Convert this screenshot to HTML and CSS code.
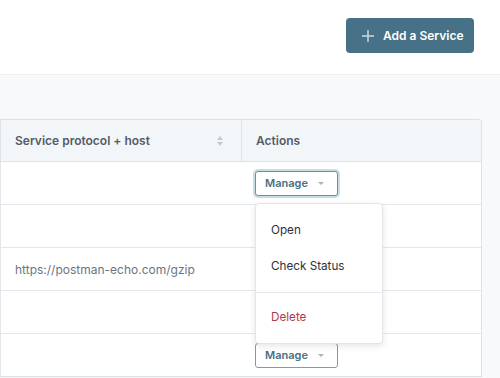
FILE: index.html
```html
<!DOCTYPE html>
<html lang="en">
<head>
  <meta charset="UTF-8">
  <meta name="viewport" content="width=device-width, initial-scale=1.0">
  <link rel="stylesheet" href="styles.css">
</head>
<body>

<div class="topbar">
  <button class="btn-add">
    <svg width="12" height="12" viewBox="0 0 12 12"><path d="M6 0v12M0 6h12" stroke="#c9d7de" stroke-width="1.5" fill="none"/></svg>
    Add a Service
  </button>
</div>

<div class="content">
  <table class="services">
    <thead>
      <tr>
        <th class="col-host">
          <div class="th-inner">
            Service protocol + host
            <svg class="sort" width="8" height="12" viewBox="0 0 8 12"><path d="M4 1L7 5H1z M4 11L1 7h6z" fill="#c3c9d0"/></svg>
          </div>
        </th>
        <th class="col-actions">Actions</th>
      </tr>
    </thead>
    <tbody>
      <tr>
        <td></td>
        <td class="actions-cell">
          <button class="btn-manage focused">Manage <span class="caret"></span></button>
          <div class="menu">
            <div class="menu-item">Open</div>
            <div class="menu-item">Check Status</div>
            <div class="menu-sep"></div>
            <div class="menu-item danger">Delete</div>
          </div>
        </td>
      </tr>
      <tr><td></td><td></td></tr>
      <tr><td class="url">https://postman-echo.com/gzip</td><td></td></tr>
      <tr><td></td><td></td></tr>
      <tr>
        <td></td>
        <td><button class="btn-manage">Manage <span class="caret"></span></button></td>
      </tr>
    </tbody>
  </table>
</div>

</body>
</html>
```

FILE: styles.css
```css
body {
  margin: 0;
  font-family: Inter, "Noto Sans", sans-serif;
  background: #f7f9fb;
  color: #2b3038;
}

.topbar {
  height: 75px;
  background: #fff;
  border-bottom: 1px solid #eef1f4;
  box-sizing: border-box;
  display: flex;
  justify-content: flex-end;
  align-items: flex-start;
  padding: 18px 26px 0 0;
}

.btn-add {
  display: flex;
  align-items: center;
  gap: 9px;
  height: 35px;
  width: 128px;
  padding: 0 0 0 16px;
  border: none;
  border-radius: 4px;
  background: #467186;
  color: #fff;
  font-family: inherit;
  font-size: 12px;
  font-weight: 600;
}

.content {
  padding-top: 44px;
}

.services {
  width: 482px;
  border-collapse: separate;
  border-spacing: 0;
  background: #fff;
  border: 1px solid #dde2e7;
  border-left: none;
  border-top-right-radius: 4px;
  font-size: 12px;
}

.services th {
  height: 41px;
  background: #f3f6f9;
  text-align: left;
  font-weight: 600;
  color: #545c68;
  padding: 0 0 0 14px;
  border-bottom: 1px solid #dde2e7;
  border-left: 1px solid #dde2e7;
}

.services th.col-host {
  width: 226px;
  padding-right: 0;
}

.services th.col-actions {
  border-top-right-radius: 4px;
}

.th-inner {
  display: flex;
  align-items: center;
  justify-content: space-between;
  padding-right: 17px;
}

.services td {
  height: 42px;
  padding: 0 0 0 14px;
  border-bottom: 1px solid #e3e7eb;
}

.services tr:last-child td {
  border-bottom: none;
}

.services td:first-child {
  border-left: 1px solid #e3e7eb;
}

.url {
  color: #6c7480;
}

.actions-cell {
  position: relative;
}

.btn-manage {
  display: inline-flex;
  align-items: center;
  gap: 10px;
  height: 25px;
  padding: 0 13px 0 9px;
  background: #fff;
  border: 1px solid #7f9aa8;
  border-radius: 3px;
  color: #4a6f83;
  font-family: inherit;
  font-size: 11px;
  font-weight: 600;
}

.btn-manage.focused {
  border-color: #6f8fa0;
  box-shadow: 0 0 0 2px #c6dde4;
}

.caret {
  width: 0;
  height: 0;
  border-left: 3px solid transparent;
  border-right: 3px solid transparent;
  border-top: 3px solid #a8b3ba;
}

.menu {
  position: absolute;
  left: 14px;
  top: 41px;
  width: 126px;
  background: #fff;
  border: 1px solid #e1e5ea;
  border-radius: 4px;
  box-shadow: 0 2px 6px rgba(30, 40, 60, 0.12);
  padding: 8px 0 8px;
  z-index: 2;
}

.menu-item {
  height: 36px;
  line-height: 36px;
  padding-left: 15px;
  font-size: 11.7px;
  color: #2d323a;
  font-weight: 400;
}

.menu-sep {
  height: 1px;
  background: #e6e9ed;
  margin: 8px 0 6px;
}

.menu-item.danger {
  color: #b23a48;
}
```
